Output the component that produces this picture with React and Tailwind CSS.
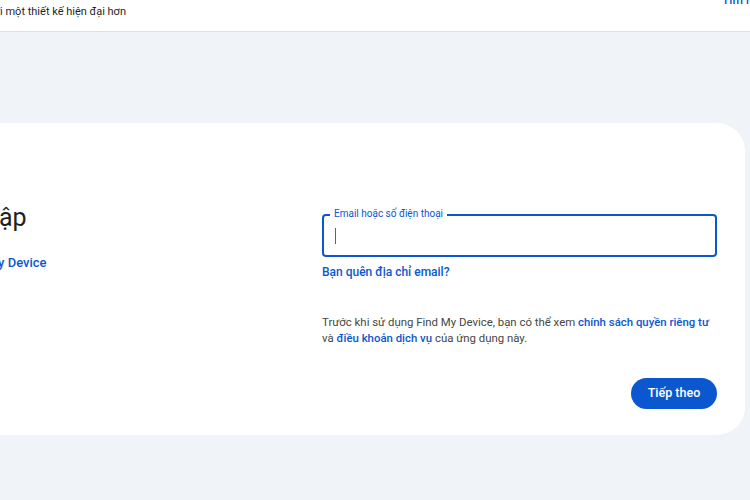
export default function App() {
  return (
    <div className="min-h-screen w-[750px] overflow-hidden bg-[#f0f4f9] font-['Roboto',sans-serif]">
      {/* Top banner */}
      <header className="h-[32px] bg-white border-b border-[#dde1e6] flex items-start justify-between">
        <div className="w-[126px] flex justify-end pt-[4px]">
          <span className="whitespace-nowrap text-[11px] leading-[16px] text-[#1f1f1f]">
            Trải nghiệm Find My Device với một thiết kế hiện đại hơn
          </span>
        </div>
        <span className="-mt-[9px] pl-[722px] absolute whitespace-nowrap text-[12px] font-medium text-[#0b57d0]">
          Tìm hiểu thêm
        </span>
      </header>

      <main className="pt-[91px]">
        <section className="-ml-[140px] w-[885px] h-[312px] bg-white rounded-[28px] flex pl-[47px] pr-[28px]">
          {/* Left column */}
          <div className="w-[415px] pt-[79px]">
            <h1 className="whitespace-nowrap text-[25px] leading-[32px] text-[#1f1f1f]">Đăng nhập</h1>
            <p className="mt-[21px] whitespace-nowrap text-[13px] leading-[16px] font-medium text-[#0b57d0]">
              Sử dụng Find My Device
            </p>
          </div>

          {/* Right column */}
          <div className="flex-1 pt-[91px] flex flex-col">
            <div className="relative h-[43px] rounded-[4px] border-2 border-[#0b57d0] flex items-center pl-[11px]">
              <span className="absolute -top-[8px] left-[6px] bg-white px-[4px] text-[10px] leading-[12px] text-[#0b57d0]">
                Email hoặc số điện thoại
              </span>
              <span className="w-px h-[16px] bg-[#5f6368]" />
            </div>
            <a className="mt-[7px] text-[12px] font-medium text-[#0b57d0] leading-[16px]">
              Bạn quên địa chỉ email?
            </a>
            <p className="mt-[34px] text-[11.4px] leading-[16px] text-[#444746]">
              Trước khi sử dụng Find My Device, bạn có thể xem{' '}
              <span className="font-medium text-[#0b57d0]">chính sách quyền riêng tư</span>
              <br />
              và <span className="font-medium text-[#0b57d0]">điều khoản dịch vụ</span> của ứng dụng này.
            </p>
            <div className="mt-[32px] flex justify-end">
              <button className="h-[31px] w-[86px] rounded-full bg-[#0b57d0] text-white text-[12.5px] font-medium">
                Tiếp theo
              </button>
            </div>
          </div>
        </section>
      </main>
    </div>
  );
}
